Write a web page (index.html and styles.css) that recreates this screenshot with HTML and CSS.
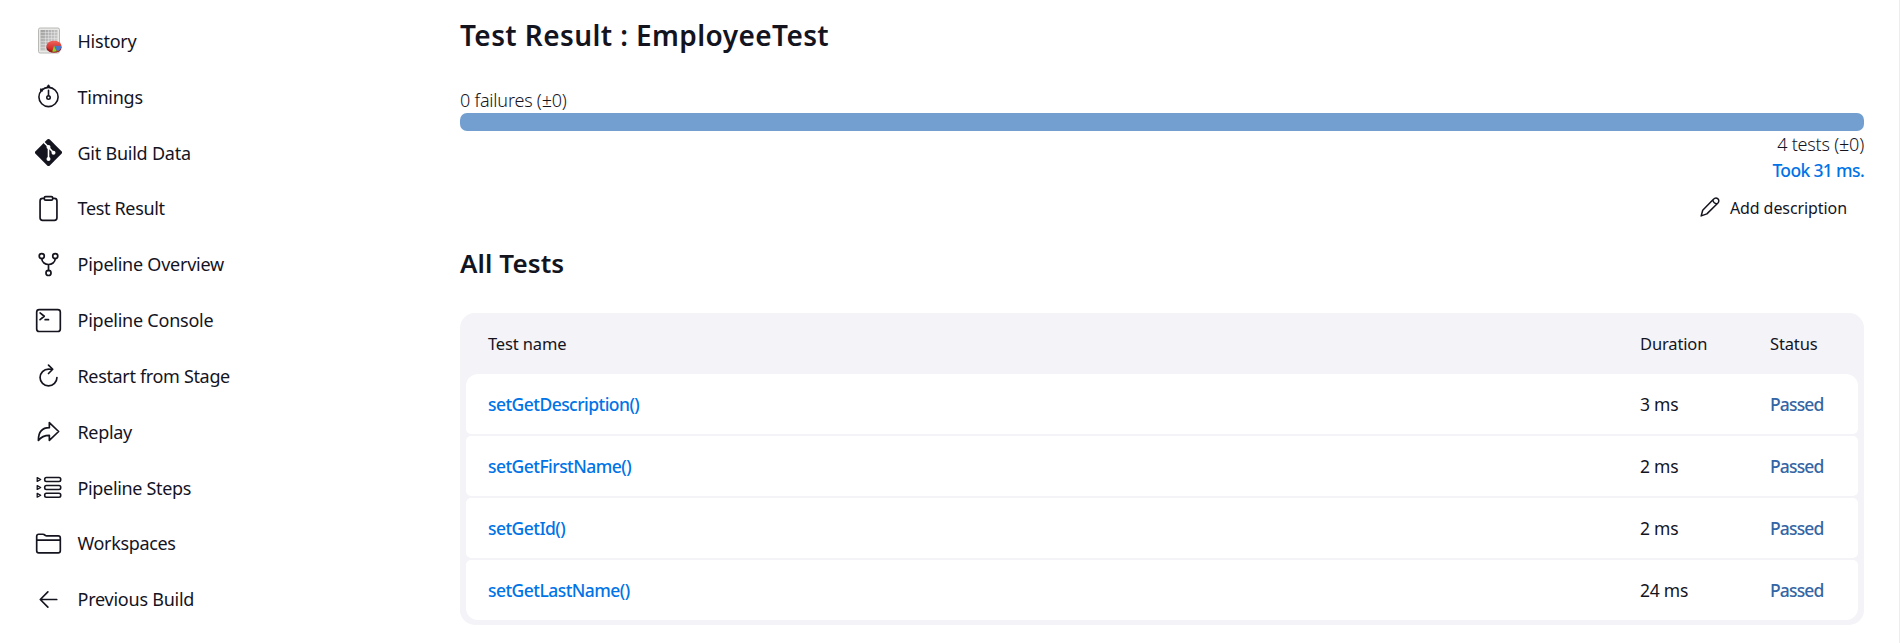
FILE: index.html
```html
<!DOCTYPE html>
<html lang="en">
<head>
<meta charset="utf-8">
<title>Test Result : EmployeeTest</title>
<link rel="stylesheet" href="styles.css">
</head>
<body>
<div class="page">
  <nav class="sidebar">
    <a class="task"><svg class="icon" viewBox="0 0 27 27">
      <defs>
        <linearGradient id="sheet" x1="0" y1="0" x2="1" y2="1"><stop offset="0" stop-color="#a0a0a0"/><stop offset="1" stop-color="#dcdcdc"/></linearGradient>
        <linearGradient id="pie" x1="0" y1="0" x2="0" y2="1"><stop offset="0" stop-color="#f0645c"/><stop offset="1" stop-color="#c8201c"/></linearGradient>
      </defs>
      <rect x="3.500" y="1" width="21" height="25" rx="1.600" fill="#e9e9e7" stroke="#b8b8b4"/>
      <rect x="5.500" y="3" width="17" height="20.500" fill="url(#sheet)"/>
      <path d="M10.500 3v20M13.500 3v20M16.500 3v20M19.500 3v20M5.500 5.500h17M5.500 8.500h17M5.500 11.500h17M5.500 14.500h17M5.500 17.500h17M5.500 20.500h17" stroke="#f4f4f4" stroke-width=".4"/>
      <ellipse cx="19" cy="20.500" rx="7.600" ry="5.300" fill="#a01c1c"/>
      <ellipse cx="19" cy="18.800" rx="7.400" ry="5" fill="url(#pie)"/>
      <path d="M19 18.800l7.300.2c0 2.800-1.500 4.600-4 5.400z" fill="#4a78c8"/>
      <path d="M19 18.800l2.800 5.500c-1.500.5-3 .5-4.500.2z" fill="#7fd62c"/>
    </svg><span>History</span></a>
    <a class="task"><svg class="icon line" viewBox="0 0 27 27"><circle cx="13.500" cy="14" r="9.600"/><circle cx="13.500" cy="14.500" r="1.700"/><path d="M13.500 7.300v5.300M13.500 2.200v2M12.500 3.200h2M5.700 6.200l1.600 1.600M5.800 7.600l1.500-1.500"/></svg><span>Timings</span></a>
    <a class="task"><svg class="icon" viewBox="0 0 27 27"><path d="M12.200.6a1.900 1.900 0 0 1 2.600 0l11.700 11.600a1.900 1.900 0 0 1 0 2.600L14.800 26.400a1.900 1.900 0 0 1-2.600 0L.5 14.800a1.900 1.900 0 0 1 0-2.600z" fill="#14141f"/><path d="M8.800 3.300l4.700 4.700v12M13.600 8.200l4.700 5.300" fill="none" stroke="#fff" stroke-width="1.600"/><g fill="#fff"><circle cx="13.500" cy="7.900" r="2"/><circle cx="13.500" cy="20" r="2"/><circle cx="18.500" cy="13.700" r="2"/></g></svg><span>Git Build Data</span></a>
    <a class="task"><svg class="icon line-lg" viewBox="0 0 512 512"><path d="M336 64h32a48 48 0 0 1 48 48v320a48 48 0 0 1-48 48H144a48 48 0 0 1-48-48V112a48 48 0 0 1 48-48h32"/><rect x="176" y="32" width="160" height="64" rx="26"/></svg><span class="tight">Test Result</span></a>
    <a class="task"><svg class="icon line-lg" viewBox="0 0 512 512"><circle cx="128" cy="96" r="48"/><circle cx="256" cy="416" r="48"/><circle cx="384" cy="96" r="48"/><path d="M256 256v112M384 144c0 74.670-68.920 112-128 112M128 144c0 74.670 68.920 112 128 112"/></svg><span>Pipeline Overview</span></a>
    <a class="task"><svg class="icon line-lg" viewBox="0 0 512 512"><rect x="32" y="48" width="448" height="416" rx="48"/><path d="M96 112l80 64-80 64M192 240h64"/></svg><span>Pipeline Console</span></a>
    <a class="task"><svg class="icon line-lg" viewBox="0 0 512 512"><path d="M320 146s24.360-12-64-12a160 160 0 1 0 160 160M256 58l80 80-80 80"/></svg><span class="tight">Restart from Stage</span></a>
    <a class="task"><svg class="icon line-lg" viewBox="0 0 512 512"><path d="M448 256L272 88v96C103.570 184 64 304.770 64 424c48.610-62.240 91.600-96 208-96v96z"/></svg><span class="tight">Replay</span></a>
    <a class="task"><svg class="icon line" viewBox="0 0 27 27"><rect x="9.700" y="3.500" width="16" height="4" rx="1.700"/><rect x="9.700" y="11.500" width="16" height="4" rx="1.700"/><rect x="9.700" y="19.300" width="16" height="4" rx="1.700"/><path d="M2.200 3.600v3.800l3.500-1.900zM2.200 11.600v3.800l3.500-1.900zM2.200 19.400v3.800l3.500-1.900z" stroke-width="1.300"/></svg><span class="tight">Pipeline Steps</span></a>
    <a class="task"><svg class="icon line-lg" viewBox="0 0 512 512"><path d="M440 432H72a40 40 0 0 1-40-40V120a40 40 0 0 1 40-40h75.890a40 40 0 0 1 22.190 6.720l27.840 18.560a40 40 0 0 0 22.190 6.720H440a40 40 0 0 1 40 40v240a40 40 0 0 1-40 40zM32 192h448"/></svg><span class="tight">Workspaces</span></a>
    <a class="task"><svg class="icon line-lg" viewBox="0 0 512 512"><path d="M244 400L100 256l144-144M120 256h292"/></svg><span>Previous Build</span></a>
  </nav>
  <main class="main">
    <h1 class="title">Test Result : EmployeeTest</h1>
    <div class="failures">0 failures (±0)</div>
    <div class="bar"></div>
    <div class="total">4 tests (±0)</div>
    <a class="took">Took 31 ms.</a>
    <a class="describe"><svg class="pencil" viewBox="0 0 20 20"><path d="M1.200 18.900L2.700 13.300 13.200 2.500C14.500 1.200 16.300.6 17.700 1.700C19.300 3 19 4.800 17.700 6.200L6.900 16.900zM12.900 2.800C13.100 5.300 14.800 6.900 17.300 6.600"/></svg><span>Add description</span></a>
    <h2 class="subtitle">All Tests</h2>
    <div class="table">
      <div class="row head"><span>Test name</span><span>Duration</span><span>Status</span></div>
      <div class="row"><a class="link">setGetDescription()</a><span>3 ms</span><span class="passed">Passed</span></div>
      <div class="row"><a class="link">setGetFirstName()</a><span>2 ms</span><span class="passed">Passed</span></div>
      <div class="row"><a class="link">setGetId()</a><span>2 ms</span><span class="passed">Passed</span></div>
      <div class="row"><a class="link">setGetLastName()</a><span>24 ms</span><span class="passed">Passed</span></div>
    </div>
  </main>
</div>
</body>
</html>
```
FILE: styles.css
```css
* { box-sizing: border-box; }
body {
  margin: 0;
  background: #fff;
  color: #14141f;
  font-family: "Noto Sans", "Open Sans", sans-serif;
  font-size: 18px;
}
.page {
  display: flex;
  height: 643px;
  overflow: hidden;
  border-right: 1px solid #ececf1;
}
.sidebar {
  width: 460px;
  padding: 13px 0 0 35px;
  flex: none;
}
.task {
  display: flex;
  align-items: center;
  gap: 15.5px;
  height: 55.83px;
  letter-spacing: -0.24px;
}
.tight { letter-spacing: -0.34px; }
.icon { width: 27px; height: 27px; flex: none; }
.line, .line-lg, .pencil {
  fill: none;
  stroke: #14141f;
  stroke-linecap: round;
  stroke-linejoin: round;
}
.line { stroke-width: 1.6; }
.line-lg { stroke-width: 32; }
.main {
  width: 1404px;
  padding-top: 15px;
  display: flex;
  flex-direction: column;
}
.title {
  margin: 0 0 32px;
  font-size: 28px;
  font-weight: 600;
  line-height: 40px;
  letter-spacing: 0.4px;
}
.failures, .total {
  font-weight: 300;
  line-height: 26px;
  letter-spacing: -0.2px;
}
.bar { height: 18px; border-radius: 7px; background: #729fcf; }
.total { text-align: right; }
.took, .link { color: #0073e6; font-weight: 500; font-size: 17.5px; }
.took { align-self: flex-end; line-height: 27px; letter-spacing: -0.65px; }
.describe {
  align-self: flex-end;
  display: flex;
  align-items: center;
  gap: 9.5px;
  height: 36px;
  margin: 6px 0 19px;
  padding-right: 17px;
  font-size: 16px;
  font-weight: 450;
  letter-spacing: -0.08px;
}
.pencil { width: 20px; height: 20px; stroke-width: 1.5; margin-bottom: 2px; }
.subtitle {
  margin: 0 0 32px;
  font-size: 26px;
  font-weight: 600;
  line-height: 36px;
  letter-spacing: 0.1px;
}
.table {
  display: flex;
  flex-direction: column;
  gap: 2px;
  padding: 0 6px 5px;
  border-radius: 15px;
  background: #f3f3f8;
}
.row {
  display: grid;
  grid-template-columns: 1fr 130px 66px;
  align-items: center;
  height: 60px;
  padding: 0 22px 1px;
  border-radius: 5px;
  background: #fff;
  font-size: 17.5px;
  letter-spacing: -0.25px;
}
.head { height: 59px; background: none; font-size: 16.5px; padding: 1px 22px 0; letter-spacing: -0.15px; }
.row:nth-child(2) { border-top-left-radius: 12px; border-top-right-radius: 12px; }
.row:last-child { border-bottom-left-radius: 12px; border-bottom-right-radius: 12px; }
.link { letter-spacing: -0.55px; }
.passed { color: #3465a4; font-weight: 500; letter-spacing: -0.85px; }
```
